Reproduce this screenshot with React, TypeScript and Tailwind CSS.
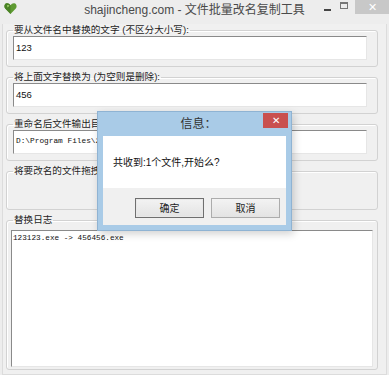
import React from "react";

const SANS = "font-[family-name:'Liberation_Sans','Noto_Sans_CJK_SC',sans-serif]";

function Group({
  label,
  children,
  className = "",
  legendClass = "",
}: {
  label: string;
  children: React.ReactNode;
  className?: string;
  legendClass?: string;
}) {
  return (
    <fieldset
      className={
        "border border-[#d2d2d2] rounded-[3px] shadow-[inset_1px_1px_0_#ffffff] min-w-0 " +
        className
      }
    >
      <legend
        className={
          "px-[1px] text-[9.6px] leading-[12px] text-[#1e1e1e] whitespace-nowrap " + legendClass
        }
      >
        {label}
      </legend>
      {children}
    </fieldset>
  );
}

function Field({ children, mono = false }: { children: React.ReactNode; mono?: boolean }) {
  return (
    <div
      className={
        "h-[24px] bg-white border-t border-l border-t-[#8a8a8a] border-l-[#8a8a8a] border-b border-r border-b-[#e6e6e6] border-r-[#e6e6e6] flex items-center pl-[2px] text-[#111] whitespace-nowrap overflow-hidden " +
        (mono
          ? "font-[family-name:'Liberation_Mono',monospace] text-[7.8px]"
          : "text-[9.5px]")
      }
    >
      {children}
    </div>
  );
}

export default function App() {
  return (
    <div className={"w-[389px] h-[375px] bg-[#ededed] relative overflow-hidden " + SANS}>
      {/* Title bar */}
      <div className="h-[22px] grid grid-cols-[1fr_auto_1fr] items-start">
        <div className="pl-[4px] pt-[2px]">
          <svg width="13" height="13" viewBox="0 0 13 13">
            <path
              d="M6.5 12 L1.2 6.4 C-0.3 4.6 0.4 1.6 2.8 1.3 C4.3 1.1 5.5 2 6.5 3.3 C7.5 2 8.7 1.1 10.2 1.3 C12.6 1.6 13.3 4.6 11.8 6.4 Z"
              fill="#5e9a32"
            />
            <path
              d="M6.5 12 L1.2 6.4 C-0.3 4.6 0.4 1.6 2.8 1.3 C4.3 1.1 5.5 2 6.5 3.3 Z"
              fill="#4a8226"
            />
            <path d="M3 3.5 C3.8 2.8 4.8 3 5.4 3.8 L3.6 5.6 Z" fill="#9fd16c" />
          </svg>
        </div>
        <div className="text-[12px] leading-[20px] text-[#4a4a4a] whitespace-nowrap">
          shajincheng.com - 文件批量改名复制工具
        </div>
        <div className="flex justify-end items-start">
          <div className="w-[16px] h-[14px] flex items-center justify-center">
            <div className="w-[7px] h-[2px] bg-[#444] mt-[6px]" />
          </div>
          <div className="w-[18px] h-[14px] flex items-center justify-center mr-[2px]">
            <div className="w-[8px] h-[7px] border border-[#777] border-t-2 mb-[3px]" />
          </div>
          <div className="w-[34px] h-[14px] bg-[#c8c8c8] flex items-center justify-center text-white text-[11px] leading-none">
            ✕
          </div>
        </div>
      </div>

      {/* Body */}
      <div className="mx-[2px] pl-[3px] pr-[8px] h-[351px] bg-[#f0f0f0] border-l border-r border-b border-[#dcdcdc]">
        <Group label="要从文件名中替换的文字 (不区分大小写):" className="mt-[2px] pl-[6px] pr-[10px] pb-[6px]">
          <Field>123</Field>
        </Group>
        <Group label="将上面文字替换为 (为空则是删除):" className="mt-[4px] pl-[6px] pr-[10px] pb-[6px]">
          <Field>456</Field>
        </Group>
        <Group label="重命名后文件输出目录" className="mt-[4px] pl-[6px] pr-[10px] pb-[6px]">
          <Field mono>D:\Program Files\2018\输出</Field>
        </Group>
        <Group label="将要改名的文件拖拽到这里" className="mt-[4px]" legendClass="ml-[6px]">
          <div className="h-[32px]" />
        </Group>
        <Group
          label="替换日志"
          className="mt-[4px] pl-[4px] pr-[4px] pt-[4px] pb-[2px]"
          legendClass="ml-[2px]"
        >
          <div className="h-[137px] bg-white border-t border-l border-t-[#8a8a8a] border-l-[#8a8a8a] border-b border-r border-b-[#e6e6e6] border-r-[#e6e6e6] pl-[1px] pt-[2px] font-[family-name:'Liberation_Mono',monospace] text-[7.7px] leading-[10px] text-[#111]">
            123123.exe -&gt; 456456.exe
          </div>
        </Group>
      </div>

      {/* Dialog */}
      <div className="absolute left-[97px] top-[111px] w-[195px] h-[120px] bg-[#a9cbe7] border border-[#8fb3d3] shadow-[2px_3px_8px_rgba(0,0,0,0.18)] flex flex-col">
        <div className="h-[24px] relative flex items-center justify-center">
          <span className="text-[12px] text-[#333] pl-[8px]">信息：</span>
          <div className="absolute top-[1px] right-[3px] w-[25px] h-[15px] bg-[#c9504f] flex items-center justify-center text-white text-[10px] leading-none">
            ✕
          </div>
        </div>
        <div className="mx-[5px] h-[52px] bg-white flex items-center pl-[10px] text-[10px] text-[#111]">
          共收到:1个文件,开始么?
        </div>
        <div className="mx-[5px] h-[37px] bg-[#f0f0f0] flex justify-end items-start gap-[7px] pt-[10px] pr-[6px]">
          <div className="w-[69px] h-[20px] border border-[#6f6f6f] shadow-[inset_0_0_0_1px_#e8e8e8] bg-gradient-to-b from-[#f3f3f3] to-[#e3e3e3] flex items-center justify-center text-[10px] text-[#222]">
            确定
          </div>
          <div className="w-[69px] h-[20px] border border-[#acacac] bg-gradient-to-b from-[#f3f3f3] to-[#e3e3e3] flex items-center justify-center text-[10px] text-[#222]">
            取消
          </div>
        </div>
      </div>
    </div>
  );
}
